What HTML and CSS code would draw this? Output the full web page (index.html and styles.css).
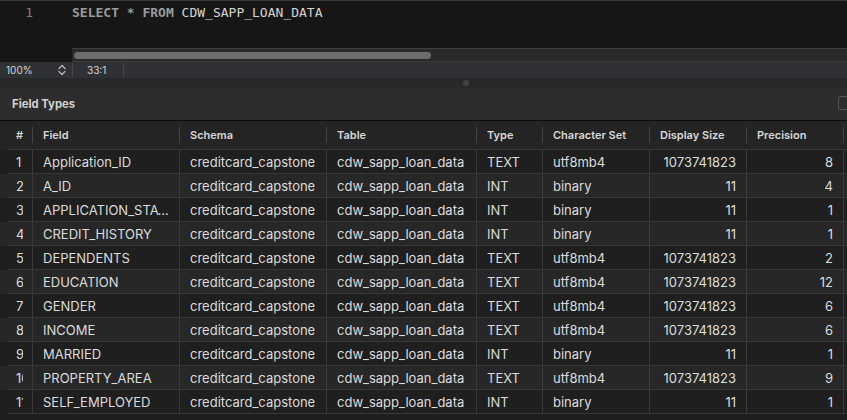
FILE: index.html
```html
<!DOCTYPE html>
<html>
<head>
<meta charset="utf-8">
<link rel="stylesheet" href="styles.css">
</head>
<body>
<div class="editor">
  <div class="gutter">1</div>
  <div class="code"><span class="kw">SELECT</span> <span class="kw">*</span> <span class="kw">FROM</span> <span class="id">CDW_SAPP_LOAN_DATA</span></div>
</div>
<div class="hscroll">
  <div class="hscroll-gutter"></div>
  <div class="hscroll-track"><div class="thumb"></div></div>
</div>
<div class="status">
  <span class="zoom">100%</span>
  <svg class="stepper" width="8" height="12" viewBox="0 0 8 12"><path d="M1 4.5 L4 1.5 L7 4.5 M1 7.5 L4 10.5 L7 7.5" fill="none" stroke="#b8b8b8" stroke-width="1.3" stroke-linecap="round" stroke-linejoin="round"/></svg>
  <span class="sep"></span>
  <span class="pos">33:1</span>
  <span class="sep"></span>
</div>
<div class="splitter"><span class="dot"></span></div>
<div class="panel-head">
  <span class="panel-title">Field Types</span>
  <span class="box"></span>
</div>
<div class="grid">
  <div class="row head">
    <div class="c first">#</div>
    <div class="c">Field</div>
    <div class="c">Schema</div>
    <div class="c">Table</div>
    <div class="c">Type</div>
    <div class="c">Character Set</div>
    <div class="c">Display Size</div>
    <div class="c">Precision</div>
    <div class="c"></div>
  </div>
  <div class="row"><div class="c first"><span class="clip">1</span></div><div class="c">Application_ID</div><div class="c">creditcard_capstone</div><div class="c">cdw_sapp_loan_data</div><div class="c">TEXT</div><div class="c">utf8mb4</div><div class="c num">1073741823</div><div class="c num">8</div><div class="c"></div></div>
  <div class="row"><div class="c first"><span class="clip">2</span></div><div class="c">A_ID</div><div class="c">creditcard_capstone</div><div class="c">cdw_sapp_loan_data</div><div class="c">INT</div><div class="c">binary</div><div class="c num">11</div><div class="c num">4</div><div class="c"></div></div>
  <div class="row"><div class="c first"><span class="clip">3</span></div><div class="c">APPLICATION_STATUS</div><div class="c">creditcard_capstone</div><div class="c">cdw_sapp_loan_data</div><div class="c">INT</div><div class="c">binary</div><div class="c num">11</div><div class="c num">1</div><div class="c"></div></div>
  <div class="row"><div class="c first"><span class="clip">4</span></div><div class="c">CREDIT_HISTORY</div><div class="c">creditcard_capstone</div><div class="c">cdw_sapp_loan_data</div><div class="c">INT</div><div class="c">binary</div><div class="c num">11</div><div class="c num">1</div><div class="c"></div></div>
  <div class="row"><div class="c first"><span class="clip">5</span></div><div class="c">DEPENDENTS</div><div class="c">creditcard_capstone</div><div class="c">cdw_sapp_loan_data</div><div class="c">TEXT</div><div class="c">utf8mb4</div><div class="c num">1073741823</div><div class="c num">2</div><div class="c"></div></div>
  <div class="row"><div class="c first"><span class="clip">6</span></div><div class="c">EDUCATION</div><div class="c">creditcard_capstone</div><div class="c">cdw_sapp_loan_data</div><div class="c">TEXT</div><div class="c">utf8mb4</div><div class="c num">1073741823</div><div class="c num">12</div><div class="c"></div></div>
  <div class="row"><div class="c first"><span class="clip">7</span></div><div class="c">GENDER</div><div class="c">creditcard_capstone</div><div class="c">cdw_sapp_loan_data</div><div class="c">TEXT</div><div class="c">utf8mb4</div><div class="c num">1073741823</div><div class="c num">6</div><div class="c"></div></div>
  <div class="row"><div class="c first"><span class="clip">8</span></div><div class="c">INCOME</div><div class="c">creditcard_capstone</div><div class="c">cdw_sapp_loan_data</div><div class="c">TEXT</div><div class="c">utf8mb4</div><div class="c num">1073741823</div><div class="c num">6</div><div class="c"></div></div>
  <div class="row"><div class="c first"><span class="clip">9</span></div><div class="c">MARRIED</div><div class="c">creditcard_capstone</div><div class="c">cdw_sapp_loan_data</div><div class="c">INT</div><div class="c">binary</div><div class="c num">11</div><div class="c num">1</div><div class="c"></div></div>
  <div class="row"><div class="c first"><span class="clip">10</span></div><div class="c">PROPERTY_AREA</div><div class="c">creditcard_capstone</div><div class="c">cdw_sapp_loan_data</div><div class="c">TEXT</div><div class="c">utf8mb4</div><div class="c num">1073741823</div><div class="c num">9</div><div class="c"></div></div>
  <div class="row"><div class="c first"><span class="clip">11</span></div><div class="c">SELF_EMPLOYED</div><div class="c">creditcard_capstone</div><div class="c">cdw_sapp_loan_data</div><div class="c">INT</div><div class="c">binary</div><div class="c num">11</div><div class="c num">1</div><div class="c"></div></div>
</div>
</body>
</html>
```

FILE: styles.css
```css
* { box-sizing: border-box; }
html, body {
  margin: 0;
  padding: 0;
  width: 847px;
  height: 420px;
  overflow: hidden;
  background: #1e1e1e;
  font-family: Inter, "Liberation Sans", sans-serif;
  color: #dcdcdc;
}
.editor {
  display: flex;
  height: 48px;
  background: #161616;
  border-top: 1px solid #3c3c3c;
}
.gutter {
  width: 72px;
  padding: 4px 39px 0 0;
  text-align: right;
  font-family: "DejaVu Sans Mono", monospace;
  font-size: 13px;
  line-height: 16px;
  color: #7e7e7e;
}
.code {
  padding-top: 4px;
  font-family: "DejaVu Sans Mono", monospace;
  font-size: 13px;
  line-height: 16px;
  white-space: pre;
}
.kw { color: #9c9c9c; font-weight: bold; }
.id { color: #d4d4d4; }
.hscroll {
  display: flex;
  height: 14px;
}
.hscroll-gutter {
  width: 72px;
  background: #161616;
}
.hscroll-track {
  flex: 1;
  background: #2a2a2a;
  border-top: 1px solid #3e3e3e;
  border-bottom: 1px solid #3a3a3a;
  padding: 3px 0 0 2px;
}
.thumb {
  width: 357px;
  height: 7px;
  border-radius: 4px;
  background: #6c6c6c;
}
.status {
  display: flex;
  align-items: center;
  height: 16px;
  background: #303134;
  font-size: 10px;
  color: #d6d6d6;
}
.zoom { margin-left: 6px; width: 52px; }
.sep {
  width: 1px;
  height: 14px;
  background: #45464a;
  margin-left: 6px;
}
.pos { margin-left: 14px; width: 36px; }
.status .sep:last-child { margin-left: 0; }
.splitter {
  height: 10px;
  background: #282828;
  display: flex;
  justify-content: center;
  align-items: center;
  padding-left: 84px;
}
.dot {
  width: 6px;
  height: 6px;
  border-radius: 50%;
  background: #424242;
}
.panel-head {
  height: 33px;
  background: #2d2d2d;
  border-bottom: 1px solid #0c0c0c;
  display: flex;
  align-items: center;
  justify-content: space-between;
  padding-left: 12px;
}
.panel-title {
  font-size: 11.3px;
  font-weight: 700;
  color: #d2d2d2;
}
.box {
  width: 13px;
  height: 14px;
  border: 1px solid #555;
  border-radius: 2px;
  margin-right: -4px;
  margin-top: -2px;
}
.grid { display: flex; flex-direction: column; }
.row {
  display: grid;
  grid-template-columns: 24px 147px 147px 150px 66px 107px 97px 97px 1fr;
  padding-left: 8px;
  height: 24px;
  font-size: 13px;
}
.row:nth-child(even) { background: #1f1f1f; }
.row:nth-child(odd) { background: #272727; }
.c {
  border-left: 1px solid #3a3a3a;
  border-bottom: 1px solid #383838;
  padding: 0 10px;
  line-height: 25px;
  white-space: nowrap;
  overflow: hidden;
  text-overflow: ellipsis;
}
.c.first {
  border-left: none;
  padding: 0 0 0 8px;
  text-overflow: clip;
}
.clip {
  display: block;
  width: 7px;
  overflow: hidden;
}
.c.num { text-align: right; }
.row.head {
  height: 29px;
  background: #242424;
  font-size: 11px;
  font-weight: 600;
  color: #d8d8d8;
}
.row.head .c {
  border-left: none;
  display: flex;
  align-items: center;
  padding: 0;
  line-height: normal;
}
.row.head .c::before {
  content: "";
  width: 1px;
  height: 16px;
  background: #444;
  margin-right: 10px;
  flex: none;
}
.row.head .c.first { padding-left: 8px; }
.row.head .c.first::before { display: none; }
```
